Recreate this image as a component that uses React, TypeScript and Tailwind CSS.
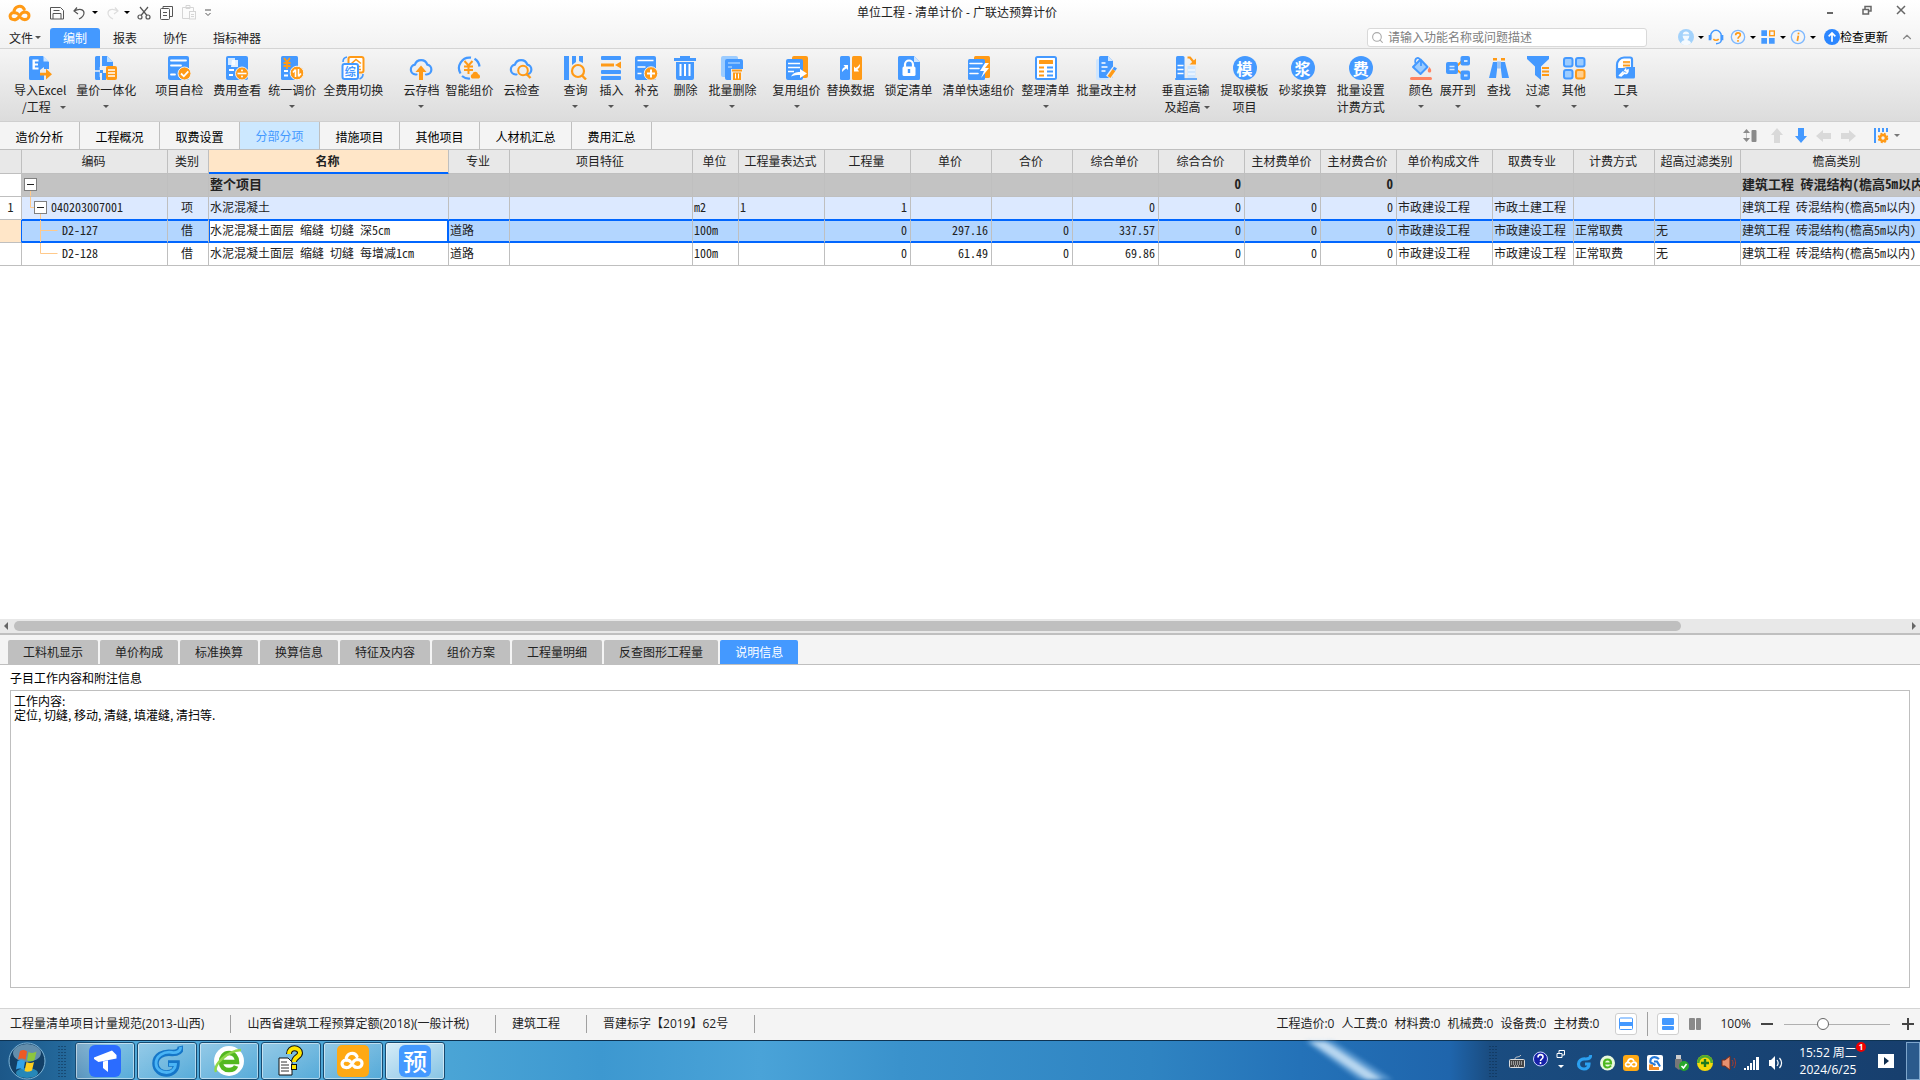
import React, { useState } from 'react';
import { ChevronUp, Search } from 'lucide-react';
import clsx from 'clsx';

const B = '#4499ff';
const O = '#ff9a16';

interface Tool {
  label: string;
  icon: React.ReactNode;
  gap: string;
  second?: string;
  secondPad?: string;
  menu?: boolean;
}

function Icon({ children, size = 'size-6' }: { children: React.ReactNode; size?: string }) {
  return (
    <svg viewBox="0 0 24 24" className={clsx('shrink-0', size)} fill="none">
      {children}
    </svg>
  );
}

function Caret({ color = 'text-black' }: { color?: string }) {
  return (
    <svg viewBox="0 0 6 3" className={clsx('w-[6px] h-[3px] shrink-0', color)}>
      <path d="M0 0h6L3 3z" fill="currentColor" />
    </svg>
  );
}

function RoundGlyph({ char }: { char: string }) {
  return (
    <span className="size-6 rounded-full bg-[#4499ff] text-white text-base font-bold leading-6 text-center block">
      {char}
    </span>
  );
}

function CloudMark({ color }: { color: string }) {
  return (
    <g stroke={color} strokeWidth="3.200" strokeLinecap="round" fill="none">
      <path d="M7.500 18.500C.5 19 .5 11.500 6 11C6.500 3.500 14.500 2.500 17 7.500" />
      <path d="M7.500 18.500C12.500 18.500 11.500 10.500 17.500 10.500C24 11 23 18.500 17.500 18.500C15.500 18.500 14.500 18 13.800 17" />
      <path d="M6.500 11.200c1.800-.2 3 .2 3.800 1.300" />
    </g>
  );
}

const cloud = (
  <path
    d="M7.500 18.500H6.500a5 5 0 0 1-.6-9.900 6.500 6.500 0 0 1 12.400 0 5 5 0 0 1-.6 9.900H17"
    stroke={B}
    strokeWidth="2.200"
    strokeLinecap="round"
  />
);

const tools: Tool[] = [
  {
    label: '导入Excel', second: '/工程', secondPad: 'pl-2', menu: true, gap: 'ml-[14px]',
    icon: (
      <Icon>
        <path d="M1 1.500A1.500 1.500 0 0 1 2.500 0H15l6 6v7h-5v-2l-4 3v5h4v5H2.500A1.500 1.500 0 0 1 1 22.500z" fill={B} />
        <path d="M15.500 0 21 5.500h-5.500z" fill="#cfe6ff" />
        <path d="M4.500 3.500h6v2h-3.600v2H10v2H6.900v2h3.600v2h-6z" fill="#fff" />
        <path d="M12 16.800h6v-4l6 5.400-6 5.300v-4h-6z" fill={O} />
      </Icon>
    )
  },
  {
    label: '量价一体化', menu: true, gap: 'ml-[10px]',
    icon: (
      <Icon>
        <path d="M1 1.500A1.500 1.500 0 0 1 2.500 0H6v24H2.500A1.500 1.500 0 0 1 1 22.500zM8 0h5l6 6v4H8zM8 17h4v7H8z" fill={B} />
        <path d="M13 0l6 6h-6z" fill="#bfe0ff" />
        <path d="M0 15h16M6.500 11v10" stroke="#f2f2f2" strokeWidth="1.600" />
        <path d="M6 14h3v3H6z" fill={B} />
        <rect x="12" y="10" width="11" height="14" rx="2" fill={O} />
        <path d="M14 14h7M14 17h7M14 20h7" stroke="#fff" strokeWidth="1.500" />
      </Icon>
    )
  },
  {
    label: '项目自检', gap: 'ml-[19px]',
    icon: (
      <Icon>
        <rect x="1" width="21" height="24" rx="2" fill={B} />
        <path d="M4 4.500h15M4 9.500h10M4 18.500h4" stroke="#fff" strokeWidth="1.800" strokeLinecap="round" />
        <circle cx="17.500" cy="17.500" r="6.500" fill={O} stroke="#f0f0f0" />
        <path d="m14 17.500 2.800 2.800 4.500-5" stroke="#fff" strokeWidth="1.800" />
      </Icon>
    )
  },
  {
    label: '费用查看', gap: 'ml-[10px]',
    icon: (
      <Icon>
        <rect x="1" width="22" height="24" rx="2" fill={B} />
        <path d="M3 2h7v7H3z" fill="#d5e9ff" />
        <path d="M7 4h6v7H6z" fill="#fff" opacity=".85" />
        <path d="M4 14h5M4 19h4" stroke="#fff" strokeWidth="1.800" />
        <circle cx="17" cy="17.500" r="6.500" fill={O} stroke="#f0f0f0" />
        <path d="M12.500 17.500h9" stroke="#fff" strokeWidth="1.600" />
        <circle cx="17" cy="14.500" r="1" fill="#fff" />
        <circle cx="17" cy="20.500" r="1" fill="#fff" />
      </Icon>
    )
  },
  {
    label: '统一调价', menu: true, gap: 'ml-[7px]',
    icon: (
      <Icon>
        <rect x="1" width="17" height="24" rx="1.500" fill={B} />
        <path d="m4 2 3 4 3-4M7 6v7M3.500 7h7M3.500 10h7" stroke={O} strokeWidth="1.800" />
        <path d="M4 15h4M4 19.500h4" stroke="#fff" strokeWidth="1.800" />
        <circle cx="17" cy="17" r="6.800" fill={O} stroke="#f0f0f0" />
        <path d="M15.500 13.500V21M15.500 13.500l-2.500 3M18.500 20.500V13M18.500 20.500l2.500-3" stroke="#fff" strokeWidth="1.600" />
      </Icon>
    )
  },
  {
    label: '全费用切换', gap: 'ml-[7px]',
    icon: (
      <Icon>
        <rect x="7.500" y="1" width="15" height="15.500" rx="2" stroke={O} strokeWidth="2" fill="#fff" />
        <path d="M10.500 7.500 15 3.500l5 4M19.500 10.500h-2M20 13.500h-2.500" stroke={O} strokeWidth="1.600" />
        <rect x="1.500" y="8" width="15.500" height="15" rx="2" stroke={B} strokeWidth="2" fill="#fff" />
        <text x="3.700" y="19.700" fontSize="11" fontWeight="700" fill={B}>综</text>
        <path d="M2 6c0-3 1-4.500 4-5M22 18c0 2.500-1 4-3.500 5" stroke={B} strokeWidth="1.600" />
      </Icon>
    )
  },
  {
    label: '云存档', menu: true, gap: 'ml-[20px]',
    icon: (
      <Icon>
        {cloud}
        <path d="M12 9.500 17.500 16H14v8h-4v-8H6.500z" fill={O} />
      </Icon>
    )
  },
  {
    label: '智能组价', gap: 'ml-[6px]',
    icon: (
      <Icon>
        <path d="M3.500 17.500A10.500 10.500 0 0 1 14 1.700M17.500 2.800a10.500 10.500 0 0 1 5 7.700M5 20a10.500 10.500 0 0 0 8 2.500" stroke={B} strokeWidth="2.200" />
        <path d="m7.500 5 4 4.500 4-4.500M11.500 9.500V18M7 10.500h9M7 14h9" stroke={O} strokeWidth="2" />
        <path d="M15 22.500a2.500 2.500 0 0 1 .5-4.500c.5-3 5-3 5.500 0a2.500 2.500 0 0 1 1 4.500z" fill={O} />
      </Icon>
    )
  },
  {
    label: '云检查', gap: 'ml-[10px]',
    icon: (
      <Icon>
        {cloud}
        <circle cx="14" cy="14.500" r="4.800" stroke={O} strokeWidth="2" fill="#eee" />
        <path d="m17.500 18 4 4" stroke={O} strokeWidth="2.400" />
      </Icon>
    )
  },
  {
    label: '查询', menu: true, gap: 'ml-[24px]',
    icon: (
      <Icon>
        <path d="M1 0h5v24H1zM9 0h4v6l-4 3zM16 0h4v7l-4-2z" fill={B} />
        <circle cx="15" cy="15" r="6" stroke={O} strokeWidth="2.200" />
        <path d="m19 19.500 4 4" stroke={O} strokeWidth="2.400" />
      </Icon>
    )
  },
  {
    label: '插入', menu: true, gap: 'ml-[12px]',
    icon: (
      <Icon>
        <rect x="2" width="20" height="4" rx="1" fill={B} />
        <rect x="2" y="14" width="20" height="4" rx="1" fill={B} />
        <rect x="2" y="20" width="20" height="4" rx="1" fill={B} />
        <path d="M2 7.500h13v3H2zM22 5.500v7l-6-3.500z" fill={O} />
      </Icon>
    )
  },
  {
    label: '补充', menu: true, gap: 'ml-[11px]',
    icon: (
      <Icon>
        <rect x="1" width="21" height="24" rx="2" fill={B} />
        <path d="M3.500 4.500h16M3.500 11h8M3.500 17.500h4" stroke="#fff" strokeWidth="1.600" />
        <circle cx="17" cy="17.500" r="6.800" fill={O} stroke="#f0f0f0" />
        <path d="M17 13.500v8M13 17.500h8" stroke="#fff" strokeWidth="2" />
      </Icon>
    )
  },
  {
    label: '删除', gap: 'ml-[15px]',
    icon: (
      <Icon>
        <path d="M1 2h6V0h10v2h6v3H1zM3 6h18v16a2 2 0 0 1-2 2H5a2 2 0 0 1-2-2z" fill={B} />
        <path d="M7.500 8v12M12 8v12M16.500 8v12" stroke="#fff" strokeWidth="2" />
      </Icon>
    )
  },
  {
    label: '批量删除', menu: true, gap: 'ml-[11px]',
    icon: (
      <Icon>
        <rect x="1" width="17" height="21" rx="2" fill="#9cccff" />
        <rect x="5" y="3" width="18" height="21" rx="2" fill={B} />
        <path d="M8 7h12M8 11h4" stroke="#9cccff" strokeWidth="1.500" />
        <path d="M11 13h12v11H11z" fill="#eee" />
        <path d="M12 13.500h10v2H12zM13 16.500h8V24h-8z" fill={O} />
        <path d="M15.500 17.500v5M18.500 17.500v5" stroke="#fff" />
      </Icon>
    )
  },
  {
    label: '复用组价', menu: true, gap: 'ml-4',
    icon: (
      <Icon>
        <rect x="7" width="16" height="22" rx="2" fill={O} />
        <rect x="1" y="3" width="17" height="21" rx="2" fill={B} />
        <path d="M3 7.500h12M3 11.500h12M3 15.500h6" stroke="#fff" strokeWidth="1.500" />
        <path d="M6 20.500c2-3.500 5-4.500 9-4.500v-3l7 4.500-7 4.500v-3c-4 0-6 0-9 1.500z" fill="#fff" />
      </Icon>
    )
  },
  {
    label: '替换数据', gap: 'ml-[6px]',
    icon: (
      <Icon>
        <rect x="1" width="10" height="24" rx="1.500" fill={B} />
        <rect x="13" width="10" height="24" rx="1.500" fill={O} />
        <path d="M3 16c0-3 .5-4 3-5L4.500 9H9v5l-1.500-1.500C6 13 5 14 3 16zM21 8c0 3-.5 4-2.500 5l1.500 2.500h-5v-5l1.500 1.500c2-1 3-2 4.500-4z" fill="#fff" />
      </Icon>
    )
  },
  {
    label: '锁定清单', gap: 'ml-[10px]',
    icon: (
      <Icon>
        <path d="M1 1.500A1.500 1.500 0 0 1 2.500 0H17l6 6v16.500a1.500 1.500 0 0 1-1.500 1.500h-19A1.500 1.500 0 0 1 1 22.500z" fill={B} />
        <path d="m17 0 6 6h-6z" fill="#cfe6ff" />
        <path d="M8 11V8.500a4 4 0 0 1 8 0V11" stroke="#fff" strokeWidth="2.200" />
        <rect x="5.500" y="10.500" width="13" height="9.500" rx="1.500" fill="#fff" />
        <path d="M12 13v4" stroke={B} strokeWidth="2.400" />
      </Icon>
    )
  },
  {
    label: '清单快速组价', gap: 'ml-[10px]',
    icon: (
      <Icon>
        <rect x="7" width="16" height="22" rx="1.500" fill={O} />
        <rect x="1" y="3" width="17" height="21" rx="1.500" fill={B} />
        <path d="M3 7.500h12M3 12.500h9M3 17.500h8" stroke="#fff" strokeWidth="1.600" strokeLinecap="round" />
        <path d="m18 7-5 8h4l-3 7 8-10h-4l4-5z" fill="#fff" />
      </Icon>
    )
  },
  {
    label: '整理清单', menu: true, gap: 'ml-[7px]',
    icon: (
      <Icon>
        <rect x="2" y="1" width="20" height="22" rx="1.500" stroke={B} strokeWidth="2" fill="#fff" />
        <rect x="5" y="4" width="14" height="4" rx=".5" fill={O} />
        <path d="M5 11.500h5M5 15.500h5M5 19.500h5" stroke={O} strokeWidth="1.800" />
        <path d="M13 11.500h6M13 15.500h6M13 19.500h6" stroke={B} strokeWidth="1.800" />
      </Icon>
    )
  },
  {
    label: '批量改主材', gap: 'ml-[7px]',
    icon: (
      <Icon>
        <rect x="1" y="3" width="13" height="21" rx="1.500" fill="#cfe6ff" />
        <path d="M4 1.500A1.500 1.500 0 0 1 5.500 0H13l5 5v15a2 2 0 0 1-2 2H5.500A1.500 1.500 0 0 1 4 20.500z" fill={B} />
        <path d="m13 0 5 5h-5z" fill="#cfe6ff" />
        <path d="M6.500 7h4M6.500 11h6M6.500 15h4" stroke="#fff" strokeWidth="1.500" />
        <path d="m13.500 21.500 6.500-9" stroke="#f0f0f0" strokeWidth="6" />
        <path d="m14 21 5-7" stroke={O} strokeWidth="3.400" />
        <path d="m19 14 1.500-2.500" stroke={B} strokeWidth="3.400" />
      </Icon>
    )
  },
  {
    label: '垂直运输', second: '及超高', secondPad: 'pl-[3px]', menu: true, gap: 'ml-[25px]',
    icon: (
      <Icon>
        <path d="M2 1.500A1.500 1.500 0 0 1 3.500 0H9a1.500 1.500 0 0 1 1.500 1.500V24H2z" fill={B} />
        <path d="M3.500 9.500h6M3.500 13.500h6M3.500 17.500h6" stroke="#fff" strokeWidth="1.500" />
        <path d="M13.500 10h8v12h-8z" fill="#cfe6ff" />
        <path d="M14 14h7M14 18h7" stroke="#fff" />
        <path d="M1 23h22" stroke={B} strokeWidth="1.600" />
        <path d="M13.500 1.500h2.500l4 5" stroke={O} strokeWidth="2.200" />
        <path d="M22 2.500V8.500h-6.500z" fill={O} />
      </Icon>
    )
  },
  { label: '提取模板', second: '项目', gap: 'ml-[11px]', icon: <RoundGlyph char="模" /> },
  { label: '砂浆换算', gap: 'ml-[10px]', icon: <RoundGlyph char="浆" /> },
  { label: '批量设置', second: '计费方式', gap: 'ml-[10px]', icon: <RoundGlyph char="费" /> },
  {
    label: '颜色', menu: true, gap: 'ml-[24px]',
    icon: (
      <Icon>
        <path d="M11.500 3.500 18.500 11 11.500 18 4 11z" fill="#9cccff" stroke={B} strokeWidth="2" strokeLinejoin="round" />
        <path d="M6.500 7.500c-1.500-6 4-8 5.500-1.500v4" stroke={B} strokeWidth="1.800" />
        <path d="M20.500 11c3 4 1.500 5.500 0 5.500s-3-1.500 0-5.500z" fill="#ff8360" />
        <rect x="1" y="21" width="22" height="3" rx="1.500" fill="#ff8360" />
      </Icon>
    )
  },
  {
    label: '展开到', menu: true, gap: 'ml-[7px]',
    icon: (
      <Icon>
        <path d="m11 10 5-5M11 14l5 4" stroke={O} strokeWidth="1.800" />
        <rect y="6" width="12" height="12" rx="2" fill={B} />
        <path d="M3.500 10.500h5M3.500 13.500h5" stroke="#cfe6ff" strokeWidth="1.400" />
        <rect x="14.500" width="9.500" height="9.500" rx="2" fill={B} />
        <rect x="14.500" y="14.500" width="9.500" height="9.500" rx="2" fill={B} />
        <path d="M18 5h3.500M18 19.500h3.500" stroke="#cfe6ff" strokeWidth="2" />
      </Icon>
    )
  },
  {
    label: '查找', gap: 'ml-[11px]',
    icon: (
      <Icon>
        <path d="M6 6h4v8l-1 8H2zM14 6h4l4 16h-7l-1-8zM10.500 5.500h1v7h-1zM12.500 5.500h1v7h-1z" fill={B} />
        <path d="M6 2h4v2.500H6zM14 2h4v2.500h-4z" fill={O} />
      </Icon>
    )
  },
  {
    label: '过滤', menu: true, gap: 'ml-[15px]',
    icon: (
      <Icon>
        <path d="M1 0h22v3l-8 7.500V24l-6-5v-8.500L1 3z" fill={B} />
        <path d="M16 12h7M16 15.500h7M16 19h7" stroke={O} strokeWidth="1.800" />
      </Icon>
    )
  },
  {
    label: '其他', menu: true, gap: 'ml-[12px]',
    icon: (
      <Icon>
        <g fill="#9cccff" stroke={B} strokeWidth="2">
          <rect x="2" y="2" width="8.500" height="8.500" rx="2" />
          <rect x="14" y="2" width="8.500" height="8.500" rx="2" />
          <rect x="2" y="14" width="8.500" height="8.500" rx="2" />
        </g>
        <rect x="14" y="14" width="8.500" height="8.500" rx="2" fill="#ffcf8f" stroke={O} strokeWidth="2" />
      </Icon>
    )
  },
  {
    label: '工具', menu: true, gap: 'ml-[28px]',
    icon: (
      <Icon>
        <path d="M3 20V9c0-4 3-7.500 7-7.500h6a2 2 0 0 1 2 2V12" stroke={B} strokeWidth="2.200" fill="#fff" />
        <path d="M9 5h7v7H9z" fill="#ffe3bd" />
        <path d="M9 6h7M9 9.500h7" stroke={O} strokeWidth="1.600" />
        <path d="M2 12h8l3-1h8v10a1.500 1.500 0 0 1-1.500 1.500h-16A1.500 1.500 0 0 1 2 21z" fill={B} />
        <path d="M5 20l4.500-4.500M12 12.500l-1 2 1.500.5 1.500-1c.5 3-2 4-3.500 3l-4 3.500" stroke="#fff" strokeWidth="1.600" />
      </Icon>
    )
  }
];

const pageTabs = ['造价分析', '工程概况', '取费设置', '分部分项', '措施项目', '其他项目', '人材机汇总', '费用汇总'];
const detailTabs = ['工料机显示', '单价构成', '标准换算', '换算信息', '特征及内容', '组价方案', '工程量明细', '反查图形工程量', '说明信息'];

const columns = [
  { title: '', width: 22, align: 'text-center' },
  { title: '编码', width: 146, align: 'text-left' },
  { title: '类别', width: 41, align: 'text-center' },
  { title: '名称', width: 240, align: 'text-left' },
  { title: '专业', width: 61, align: 'text-left' },
  { title: '项目特征', width: 183, align: 'text-left' },
  { title: '单位', width: 46, align: 'text-left' },
  { title: '工程量表达式', width: 86, align: 'text-left' },
  { title: '工程量', width: 86, align: 'text-right' },
  { title: '单价', width: 81, align: 'text-right' },
  { title: '合价', width: 81, align: 'text-right' },
  { title: '综合单价', width: 86, align: 'text-right' },
  { title: '综合合价', width: 86, align: 'text-right' },
  { title: '主材费单价', width: 76, align: 'text-right' },
  { title: '主材费合价', width: 76, align: 'text-right' },
  { title: '单价构成文件', width: 96, align: 'text-left' },
  { title: '取费专业', width: 81, align: 'text-left' },
  { title: '计费方式', width: 81, align: 'text-left' },
  { title: '超高过滤类别', width: 86, align: 'text-left' },
  { title: '檐高类别', width: 194, align: 'text-left' }
];

const height5m = '建筑工程 砖混结构(檐高5m以内)';

const rows = [
  { kind: 'total', cells: ['', '', '', '整个项目', '', '', '', '', '', '', '', '', '0', '', '0', '', '', '', '', height5m] },
  { kind: 'item', cells: ['1', '040203007001', '项', '水泥混凝土', '', '', 'm2', '1', '1', '', '', '0', '0', '0', '0', '市政建设工程', '市政土建工程', '', '', height5m] },
  { kind: 'selected', cells: ['', 'D2-127', '借', '水泥混凝土面层 缩缝 切缝 深5cm', '道路', '', '100m', '', '0', '297.16', '0', '337.57', '0', '0', '0', '市政建设工程', '市政建设工程', '正常取费', '无', height5m] },
  { kind: 'plain', cells: ['', 'D2-128', '借', '水泥混凝土面层 缩缝 切缝 每增减1cm', '道路', '', '100m', '', '0', '61.49', '0', '69.86', '0', '0', '0', '市政建设工程', '市政建设工程', '正常取费', '无', height5m] }
];

const rowStyles: Record<string, string> = {
  total: 'bg-[#c3c3c3] font-bold text-[13px] border-[#bfbfbf]',
  item: 'bg-[#dce9ff] border-r-[#bfbfbf] border-b-[#0066ff]',
  selected: 'bg-[#b3d6ff] border-r-[#bfbfbf] border-b-[#0066ff] shadow-[inset_0_1px_0_#0066ff,inset_0_-1px_0_#0066ff]',
  plain: 'bg-white border-[#bfbfbf]'
};

function Toggle({ x }: { x: number }) {
  return (
    <>
      <rect x={x + 0.5} y="4.500" width="12" height="12" fill="#fff" stroke="#808080" />
      <path d={`M${x + 3} 10.500h7`} stroke="#222" />
    </>
  );
}

function TreeCell({ kind, text }: { kind: string; text: string }) {
  const branch = '#ffc98a';
  if (kind === 'total') {
    return (
      <button type="button" aria-label="折叠整个项目" className="block">
        <svg width="28" height="22" fill="none">
          <path d="M8.500 17v5" stroke={branch} />
          <Toggle x={2} />
        </svg>
      </button>
    );
  }
  if (kind === 'item') {
    return (
      <div className="flex items-center">
        <button type="button" aria-label="折叠清单" className="block">
          <svg width="29" height="22" fill="none">
            <path d="M8.500 0v10.500h4M18.500 17v5" stroke={branch} />
            <Toggle x={12} />
          </svg>
        </button>
        <span className="pb-[2px]">{text}</span>
      </div>
    );
  }
  return (
    <div className="flex items-center">
      <svg width="40" height="22" fill="none">
        <path d={kind === 'selected' ? 'M18.500 0v22M18.500 10.500h17' : 'M18.500 0v10.500h17'} stroke={branch} />
      </svg>
      <span className="pb-[2px]">{text}</span>
    </div>
  );
}

function BillTable() {
  return (
    <table className="table-fixed w-[1935px] border-separate border-spacing-0 text-xs leading-4 text-[#222] font-['Noto_Sans_Mono_CJK_SC','Noto_Sans_CJK_SC',monospace]">
      <colgroup>
        {columns.map((col, i) => <col key={i} style={{ width: col.width }} />)}
      </colgroup>
      <thead>
        <tr>
          {columns.map((col, i) => (
            <th
              key={i}
              className={clsx(
                'h-6 pt-0 pb-[2px] pl-0 pr-[2px] border-r border-b border-r-[#bfbfbf] text-center whitespace-nowrap',
                col.title === '名称'
                  ? 'bg-[#ffe6c8] font-bold border-b-[#0066ff] shadow-[inset_0_-1px_0_#0066ff]'
                  : 'bg-[#e8e8e8] font-normal border-b-[#bfbfbf]'
              )}
            >
              {col.title}
            </th>
          ))}
        </tr>
      </thead>
      <tbody>
        {rows.map((row, r) => (
          <tr key={r}>
            {row.cells.map((text, c) => {
              if (c === 0) {
                return (
                  <td
                    key={c}
                    className={clsx(
                      'h-[23px] pt-0 px-0 pb-[2px] border-r border-b border-b-[#bfbfbf] text-center',
                      row.kind === 'selected' ? 'bg-[#ffe6c8] border-r-[#0066ff]' : 'bg-white border-r-[#bfbfbf]'
                    )}
                  >
                    {text}
                  </td>
                );
              }
              const editing = row.kind === 'selected' && c === 3;
              return (
                <td
                  key={c}
                  className={clsx(
                    'h-[23px] pt-0 border-r border-b whitespace-pre overflow-hidden',
                    c === 1 ? 'px-0 pb-0' : 'pl-px pr-[3px] pb-[2px]',
                    columns[c].align,
                    editing
                      ? 'bg-white border-[#0066ff] shadow-[inset_0_0_0_1px_#0066ff]'
                      : rowStyles[row.kind]
                  )}
                >
                  {c === 1 ? <TreeCell kind={row.kind} text={text} /> : text}
                </td>
              );
            })}
          </tr>
        ))}
      </tbody>
    </table>
  );
}

function TitleBar() {
  return (
    <div className="flex items-start h-6 text-[#555]">
      <div className="flex-1 flex items-center pl-2">
        <svg viewBox="0 2 24 19" className="w-[23px] h-[18px] mt-[3px]"><CloudMark color={O} /></svg>
        <div className="flex items-center pl-[19px] pt-[2px]">
          <button type="button" aria-label="保存">
            <svg width="14" height="14" fill="none" stroke="currentColor"><path d="M.5 1.500h10l3 3v8.500H.5zM3 13V7.500h8V13M3.500 4.500h6" /></svg>
          </button>
          <button type="button" aria-label="撤销" className="ml-2">
            <svg width="14" height="14" fill="none" stroke="currentColor" strokeWidth="1.200"><path d="M5 1.500 2 5l4 3M2 5c6-3 10-1.500 10 2 0 2.500-2 4.500-5 6" /></svg>
          </button>
          <span className="ml-[6px]"><Caret /></span>
          <button type="button" aria-label="重做" className="ml-2 text-[#ddd]">
            <svg width="14" height="14" fill="none" stroke="currentColor" strokeWidth="1.200"><path d="m9 1.500 3 3.500-4 3M12 5C6 2 2 3.500 2 7c0 2.500 2 4.500 5 6" /></svg>
          </button>
          <span className="ml-1"><Caret /></span>
          <button type="button" aria-label="剪切" className="ml-[7px]">
            <svg width="14" height="14" fill="none" stroke="currentColor" strokeWidth="1.200"><circle cx="3" cy="11" r="2" /><circle cx="11" cy="11" r="2" /><path d="m3 1 7 8.500M11 1 4 9.500" /></svg>
          </button>
          <button type="button" aria-label="复制" className="ml-[9px]">
            <svg width="14" height="14" fill="none" stroke="currentColor"><rect x=".5" y="2.500" width="9" height="11" rx="1" /><path d="M3 2.500v-2h9.500v10H10M3 6.500h4M3 9.500h4" /></svg>
          </button>
          <button type="button" aria-label="粘贴" className="ml-2 text-[#d5d5d5]">
            <svg width="15" height="15" fill="none" stroke="currentColor"><path d="M7 13.500H.5v-11h11V6M4 3.500v-3h4v3z" /><rect x="7.500" y="6.500" width="6" height="7.500" /><path d="M9 9.500h3M9 11.500h3" /></svg>
          </button>
          <button type="button" aria-label="自定义快速访问" className="ml-[7px]">
            <svg width="8" height="8" fill="none" stroke="currentColor"><path d="M1 1h6M1.500 4 4 6.500 6.500 4" /></svg>
          </button>
        </div>
      </div>
      <h1 className="text-xs text-[#222] pt-1 leading-4 font-['Open_Sans','Noto_Sans_CJK_SC',sans-serif]">单位工程 - 清单计价 - 广联达预算计价</h1>
      <div className="flex-1 flex justify-end items-center pr-[14px] pt-[3px]">
        <button type="button" aria-label="最小化"><svg width="12" height="12"><path d="M3 9h6" stroke="#666" strokeWidth="2" /></svg></button>
        <button type="button" aria-label="还原" className="ml-[26px]">
          <svg width="10" height="12" fill="none" stroke="#666" strokeWidth="1.500"><path d="M1 5.500h5.500v4.500H1zM3 5V2.500h6V7H7" /></svg>
        </button>
        <button type="button" aria-label="关闭" className="ml-6"><svg width="10" height="12"><path d="m1 2 8 8M9 2l-8 8" stroke="#666" strokeWidth="1.500" /></svg></button>
      </div>
    </div>
  );
}

function MenuBar() {
  return (
    <nav className="flex items-center h-6 text-xs text-[#222] border-b border-[#d4d4d4]">
      <button type="button" className="flex items-center gap-[2px] pl-[9px] pt-[2px] w-[50px]">文件<Caret color="text-[#555]" /></button>
      <button type="button" className="w-[50px] h-5 mt-[3px] rounded-t-[3px] bg-[#4499ff] text-white">编制</button>
      <button type="button" className="w-[50px] pt-[2px]">报表</button>
      <button type="button" className="w-[50px] pt-[2px]">协作</button>
      <button type="button" className="w-[74px] pt-[2px]">指标神器</button>
      <label className="ml-auto flex items-center w-[280px] h-[19px] mt-px bg-white border border-[#d9d9d9] rounded-[3px] pl-[3px] gap-1">
        <Search size={13} color="#aaa" />
        <input
          aria-label="搜索"
          placeholder="请输入功能名称或问题描述"
          className="flex-1 min-w-0 text-xs outline-none placeholder:text-[#808080]"
        />
      </label>
      <div className="flex items-center pl-[31px] pr-[6px] mt-px">
        <Icon size="size-4">
          <circle cx="12" cy="12" r="12" fill="#a3d2fb" />
          <path d="M7 9c0-7 10-7 10 0 0 6-3 6-2.500 8 4 1 5 3 5 4.500a12 12 0 0 1-15 0C4.500 20 5.500 18 9.500 17 10 15 7 15 7 9z" fill="#f4faff" />
          <path d="M5 9h14" stroke="#a3d2fb" strokeWidth="2" />
        </Icon>
        <span className="ml-1"><Caret /></span>
        <span className="ml-1">
          <Icon size="size-4">
            <path d="M4 15V10a8 8 0 0 1 16 0v6c0 4-4 6-8 6" stroke={B} strokeWidth="2.200" />
            <path d="M1 9h4v8H1zM19 9h4v8h-4z" fill={B} />
            <path d="M8 15c2 2.500 6 2.500 8 0" stroke={O} strokeWidth="2.400" />
          </Icon>
        </span>
        <span className="ml-[6px]">
          <Icon size="size-4">
            <circle cx="12" cy="12" r="10" stroke="#7db8ff" strokeWidth="2" />
            <path d="M8.500 9.500c0-5 7-4.500 7-.5 0 2.500-3.500 2.500-3.500 5.500M12 16.500V19" stroke={O} strokeWidth="2.400" />
          </Icon>
        </span>
        <span className="ml-1"><Caret /></span>
        <span className="ml-1">
          <Icon size="size-4">
            <path d="M2 2h8.500v8.500H2zM2 13.500h8.500V22H2zM13.500 13.500H22V22h-8.500z" fill={B} />
            <rect x="14.500" y="3" width="7" height="7" stroke={O} strokeWidth="2" />
          </Icon>
        </span>
        <span className="ml-1"><Caret /></span>
        <span className="ml-1">
          <Icon size="size-4">
            <circle cx="12" cy="12" r="10" stroke="#7db8ff" strokeWidth="2" />
            <path d="m12.500 10-1.500 8M13 5.500l-.5 2.500" stroke={O} strokeWidth="2.600" />
          </Icon>
        </span>
        <span className="ml-1"><Caret /></span>
        <button type="button" className="flex items-center ml-2 text-black">
          <Icon size="size-4">
            <circle cx="12" cy="12" r="12" fill="#2b86ff" />
            <path d="M12 19V7M7 11l5-5 5 5" stroke="#fff" strokeWidth="2.600" />
          </Icon>
          检查更新
        </button>
        <button type="button" aria-label="收起功能区" className="ml-3 text-[#888]"><ChevronUp size={14} /></button>
      </div>
    </nav>
  );
}

function Ribbon() {
  return (
    <div className="flex items-start h-[73px] pt-[7px] border-b border-[#cfcfcf] bg-linear-to-b from-[#f5f5f5] to-[#dcdcdc] text-xs leading-4 text-[#222]">
      {tools.map(tool => (
        <button key={tool.label} type="button" className={clsx('flex flex-col items-center shrink-0 whitespace-nowrap', tool.gap)}>
          {tool.icon}
          <span className="mt-[2px]">{tool.label}</span>
          {tool.second ? (
            <span className={clsx('flex items-center w-full pt-px', tool.menu ? 'justify-between' : 'justify-center', tool.secondPad)}>
              {tool.second}
              {tool.menu && <Caret color="text-[#555]" />}
            </span>
          ) : tool.menu && (
            <span className="flex items-center h-4"><Caret color="text-[#555]" /></span>
          )}
        </button>
      ))}
    </div>
  );
}

function PageTabs() {
  return (
    <div className="flex h-7 bg-[#f4f4f4] border-b border-[#bfbfbf] text-xs text-black">
      {pageTabs.map(tab => (
        <button
          key={tab}
          type="button"
          className={clsx(
            'border-r border-[#bfbfbf]',
            tab.length > 4 ? 'w-[92px]' : 'w-20',
            tab === '分部分项' ? 'bg-[#cce8ff] text-[#4499ff]' : 'pt-[2px]'
          )}
        >
          {tab}
        </button>
      ))}
      <div className="ml-auto flex items-center pr-5">
        <svg width="14" height="14"><path d="M3.500 0 7 4H0zM0 9h7l-3.500 4z" fill="#8a8a8a" /><path d="M3.500 3.500v6" stroke="#8a8a8a" strokeDasharray="1 1" /><rect x="8.500" y="1" width="5" height="12" rx="1" fill="#8a8a8a" /></svg>
        <svg width="12" height="16" className="ml-[14px]"><path d="m6 0 6 7H9v8H3V7H0z" fill="#d9d9d9" /></svg>
        <svg width="12" height="16" className="ml-3"><path d="M3 0h6v8h3l-6 7-6-7h3z" fill={B} /></svg>
        <svg width="16" height="12" className="ml-[9px]"><path d="m0 6 7-6v3h8v6H7v3z" fill="#d9d9d9" /></svg>
        <svg width="16" height="12" className="ml-[9px]"><path d="M15 6 8 0v3H0v6h8v3z" fill="#d9d9d9" /></svg>
        <svg width="15" height="16" className="ml-[17px]">
          <path d="M1 0v15M5 0v4M9 0v4M13 0v4" stroke={B} strokeWidth="2" />
          <circle cx="9" cy="10" r="3" fill="none" stroke={O} strokeWidth="2.600" />
          <circle cx="9" cy="10" r="4.500" fill="none" stroke={O} strokeWidth="1.500" strokeDasharray="2 1.600" />
        </svg>
        <span className="ml-[5px]"><Caret color="text-[#777]" /></span>
      </div>
    </div>
  );
}

function DetailPanel() {
  const [active, setActive] = useState('说明信息');
  return (
    <section className="flex-[373] min-h-0 flex flex-col bg-white">
      <div className="flex items-end gap-[2px] h-[30px] pl-2 bg-[#f4f4f4] border-b border-[#bfbfbf] text-xs text-[#222]">
        {detailTabs.map(tab => (
          <button
            key={tab}
            type="button"
            onClick={() => setActive(tab)}
            className={clsx('h-6 px-[15px] rounded-t-[2px]', tab === active ? 'bg-[#4499ff] text-white' : 'bg-[#bfbfbf]')}
          >
            {tab}
          </button>
        ))}
      </div>
      <label htmlFor="note" className="block pl-[10px] pt-[5px] text-xs leading-4 text-black">子目工作内容和附注信息</label>
      <textarea
        id="note"
        readOnly
        value={'工作内容:\n定位, 切缝, 移动, 清缝, 填灌缝, 清扫等.'}
        className="flex-1 resize-none outline-none mx-[10px] mt-1 mb-5 border border-[#bfbfbf] px-[3px] py-[3px] text-xs leading-[14px] text-black"
      />
    </section>
  );
}

function StatusBar() {
  const specs = ['工程量清单项目计量规范(2013-山西)', '山西省建筑工程预算定额(2018)(一般计税)', '建筑工程', '晋建标字【2019】62号'];
  const totals = ['工程造价:0', '人工费:0', '材料费:0', '机械费:0', '设备费:0', '主材费:0'];
  return (
    <footer className="flex items-center h-8 pb-px bg-[#f4f4f4] border-t border-[#d4d4d4] text-xs text-[#222] whitespace-nowrap font-['Open_Sans','Noto_Sans_CJK_SC',sans-serif]">
      {specs.map((spec, i) => (
        <span key={spec} className={clsx('pr-[26px] border-r border-[#a0a0a0] leading-[18px]', i === 0 ? 'pl-[10px]' : 'pl-4')}>{spec}</span>
      ))}
      <div className="ml-auto flex items-center gap-[7px]">
        {totals.map(total => <span key={total}>{total}</span>)}
      </div>
      <button type="button" aria-label="单屏" className="ml-4 flex items-center justify-center w-[22px] h-[22px] rounded-[3px] bg-white border border-[#cfcfcf]">
        <svg width="14" height="14" fill="none"><rect x=".5" y="1" width="13" height="11.500" rx="1" stroke={B} /><path d="M0 7h14" stroke={B} strokeWidth="4" /></svg>
      </button>
      <span className="ml-[10px] h-6 w-px bg-[#a0a0a0]" />
      <button type="button" aria-label="上下分屏" className="ml-[9px] flex items-center justify-center w-[22px] h-[22px] rounded-[3px] bg-white border border-[#cfcfcf]">
        <svg width="12" height="12" fill={B}><rect width="12" height="7" rx="1" /><rect y="8" width="12" height="4" rx="1" /></svg>
      </button>
      <button type="button" aria-label="左右分屏" className="ml-[10px]">
        <svg width="13" height="12" fill="#8a8a8a"><rect width="6" height="12" rx="1" /><rect x="7" width="5" height="12" rx="1" /></svg>
      </button>
      <span className="ml-[18px]">100%</span>
      <button type="button" aria-label="缩小" className="ml-[10px]"><svg width="12" height="12"><path d="M0 6h12" stroke="#444" strokeWidth="2" /></svg></button>
      <input
        type="range"
        aria-label="缩放"
        defaultValue={35}
        className="ml-[11px] w-[106px] h-3 appearance-none bg-transparent [&::-webkit-slider-runnable-track]:h-px [&::-webkit-slider-runnable-track]:bg-[#b0b0b0] [&::-webkit-slider-thumb]:appearance-none [&::-webkit-slider-thumb]:size-3 [&::-webkit-slider-thumb]:-mt-[6px] [&::-webkit-slider-thumb]:rounded-full [&::-webkit-slider-thumb]:border [&::-webkit-slider-thumb]:border-[#666] [&::-webkit-slider-thumb]:bg-white"
      />
      <button type="button" aria-label="放大" className="ml-3 mr-[6px]"><svg width="12" height="12"><path d="M0 6h12M6 0v12" stroke="#444" strokeWidth="2" /></svg></button>
    </footer>
  );
}

function Grip() {
  return (
    <svg width="8" height="32" className="shrink-0">
      <path d="M1 1v31M4 1v31M7 1v31" stroke="#0d2c4d" strokeDasharray="1 2" />
    </svg>
  );
}

const apps = [
  {
    name: 'T',
    icon: (
      <svg width="32" height="32"><rect width="32" height="32" rx="6" fill="#2b6cff" /><path d="M5 12.500 23 5.500l4.500 4.500v3.500L9.500 17 5 14zM14 16.500l5-1v11.500l-5-4z" fill="#fff" /></svg>
    )
  },
  {
    name: 'G',
    icon: (
      <svg width="32" height="32" fill="none">
        <path d="M29.500 1c1 5-3 7-8 7C12 6.500 4.500 11 4.500 18.500 4.500 25 10 28.500 15.500 28.500c6 0 10-4 10-10H17" stroke="#1576c8" strokeWidth="6.500" />
        <path d="M29.500 2c.5 4-4 6-8 5.500C12.500 6 5 11 5 18.500c0 5.500 5 9 10.500 9 5 0 9-3.500 9-8H18" stroke="#4ab4f5" strokeWidth="2.800" />
      </svg>
    )
  },
  {
    name: 'e',
    icon: (
      <svg width="32" height="32" fill="none">
        <circle cx="16" cy="16" r="15" fill="#fff" />
        <path d="M9 17h15c0-5-3-9-8-9s-8 4-8 9 3 8 8 8c3 0 6-1 7-4" stroke="#52b820" strokeWidth="4.500" />
        <path d="M3 27C0 20 14 6 28 5" stroke="#8fd84a" strokeWidth="2.400" />
      </svg>
    )
  },
  {
    name: '帮助',
    icon: (
      <svg width="32" height="32" fill="none">
        <path d="M4 13h9l4 4v13H4z" fill="#fff" stroke="#111" />
        <path d="M6 17h6M6 20h8M6 23h8M6 26h8" stroke="#333" />
        <path d="M14 9c0-8 11-7 11-1 0 4-6 4-6 9" stroke="#111" strokeWidth="6" />
        <path d="M14 9c0-8 11-7 11-1 0 4-6 4-6 9" stroke="#ffe600" strokeWidth="4" />
        <rect x="16.500" y="19.500" width="5" height="5" fill="#ffe600" stroke="#111" />
      </svg>
    )
  },
  {
    name: '广联达',
    icon: (
      <svg width="32" height="32" fill="none">
        <rect width="32" height="32" rx="5" fill="#ffa914" />
        <g transform="translate(3 4)"><CloudMark color="#fff" /></g>
      </svg>
    )
  },
  {
    name: '预',
    icon: <span className="size-8 rounded-[6px] bg-[#4499ff] text-white text-2xl font-medium leading-8 text-center">预</span>
  }
];

function Taskbar() {
  return (
    <div className="flex items-center h-10 border-t border-[#0e3352] text-white bg-[linear-gradient(90deg,#1c5788_0px,#246a9d_70px,#4fa8d8_110px,#4ba5d6_440px,#3d98d0_600px,#4aa3d8_760px,#3a92cc_900px,#2f84c2_1150px,#2472b8_1300px,#1f65ac_1450px,#1a4c80_1490px,#173f6e_1900px)]">
      <button type="button" aria-label="开始" className="ml-2 shrink-0">
        <svg width="38" height="38" fill="none">
          <circle cx="19" cy="19" r="18" fill="#123f66" stroke="#7fb6d8" />
          <ellipse cx="19" cy="11" rx="14" ry="9" fill="#8fb8d2" opacity=".65" />
          <ellipse cx="19" cy="31" rx="11" ry="5" fill="#2fa7dc" opacity=".7" />
          <path d="M12 9c3-1.500 5-1 7 .5L17.500 18c-2-1.500-4-2-7.500-.5z" fill="#ee5a24" />
          <path d="M20.500 10c2.500 1 4.500 1.500 8-.5l-2 8.500c-3 1.500-5 1.500-7.500.5z" fill="#8cc63f" />
          <path d="M9.500 19c3-1.500 5.500-1 7.500.5L15.500 28c-2-1.500-4.500-2-7.500-.5z" fill="#35a3e8" />
          <path d="M18.500 20c2.500 1 4.500 1.500 7.500 0l-2 8.500c-3 1.500-5 1.500-7.500.5z" fill="#ffce1f" />
        </svg>
      </button>
      <span className="ml-3"><Grip /></span>
      <div className="flex gap-[2px] ml-[9px]">
        {apps.map(app => (
          <button
            key={app.name}
            type="button"
            aria-label={app.name}
            className={clsx(
              'flex items-center justify-center w-[60px] h-[38px] rounded-[3px] border border-[#174a70] shadow-[inset_0_0_0_1px_rgba(255,255,255,0.5)]',
              app.name === '预' ? 'bg-linear-to-br from-[#d5ecf8] to-[#86c4e4]' : 'bg-linear-to-br from-white/40 to-white/5'
            )}
          >
            {app.icon}
          </button>
        ))}
      </div>
      <svg width="120" height="39" className="ml-auto mr-[64px] blur-[2px]">
        <path d="M0 0h28l60 39H54z" fill="#8cc0ec" opacity=".5" />
        <path d="M4 0h16l58 39H62z" fill="#d9ecfb" opacity=".75" />
      </svg>
      <Grip />
      <div className="flex items-center pl-3 gap-[10px] shrink-0">
        <div className="flex items-center gap-2">
          <svg width="16" height="14" fill="none"><rect x=".5" y="5.500" width="15" height="8" rx="1" fill="#444" stroke="#ddd" /><path d="M2 8h12M2 10h12M5 12h6" stroke="#eee" strokeDasharray="1 1" /><path d="M6 5c0-3 4-1 6-4" stroke="#ccc" /></svg>
          <svg width="15" height="16" className="mb-1"><circle cx="7.500" cy="8" r="7" fill="#1721a8" stroke="#c9d2ff" /><path d="M5 6.500c0-4 5-3.500 5-.5 0 2-2.500 2-2.500 4M7.500 11v2" fill="none" stroke="#fff" strokeWidth="1.600" /></svg>
          <svg width="10" height="24" fill="none" className="mb-1"><path d="M1 6.500h5v4H1zM3 6V3.500h5.500V8H6" stroke="#fff" /><path d="M2 18h6l-3 3z" fill="#fff" /></svg>
        </div>
        <div className="flex items-center gap-2 pt-1">
          <svg width="16" height="16" fill="none"><path d="M14.500 0c.5 3-2 4-5 4C5 3.500 2.500 6 2.500 9s2.500 5 5.500 5 5-2 5-5H9" stroke="#2ba0f0" strokeWidth="3.200" /></svg>
          <svg width="15" height="16" fill="none"><circle cx="7.500" cy="8" r="7.500" fill="#e8f8dc" /><path d="M4.500 8.500H11c0-2.500-1.500-4-3.500-4S4 6 4 8.500s1.500 4 3.500 4c1.500 0 2.500-.5 3.500-2" stroke="#4cb81e" strokeWidth="2.200" /></svg>
          <svg width="16" height="16" fill="none"><rect width="16" height="16" rx="3" fill="#ffa914" /><g transform="translate(1.500 1.500) scale(.54)"><CloudMark color="#fff" /></g></svg>
          <svg width="16" height="16" fill="none"><rect width="16" height="16" rx="2" fill="#fff" /><path d="M12 4C7 0 2.500 3 3.500 7.500l5 2.500M7 6.500h3l3 5" stroke="#2478d8" strokeWidth="2.200" /><path d="M2 9.500h4V12h6v3H2z" fill="#f58a1f" /></svg>
        </div>
        <div className="flex items-center gap-2 pt-1">
          <svg width="16" height="18"><path d="M3 1h5v5H3z" fill="#ccc" /><path d="M2 5h7v8l-3 3-4-3z" fill="#777" /><circle cx="11" cy="12" r="5" fill="#27a62b" /><path d="m8.500 12 2 2 3-4" fill="none" stroke="#fff" strokeWidth="1.600" /></svg>
          <svg width="16" height="16"><circle cx="8" cy="8" r="8" fill="#f5d90a" /><path d="M0 8a8 8 0 0 1 16 0z" fill="#4dab2f" /><circle cx="8" cy="8" r="5.500" fill="#f5d90a" /><path d="M8 4v8M4 8h8" stroke="#1e7a1e" strokeWidth="2.400" /></svg>
          <svg width="15" height="16" fill="none"><path d="M1 5h3l5-4v14l-5-4H1z" fill="#e8916f" stroke="#7a2a18" /><path d="M11 5c1.500 2 1.500 4 0 6M13 3c2 3 2 7 0 10" stroke="#b03a2a" /></svg>
          <svg width="16" height="14" fill="#fff"><path d="M0 12h2v2H0zM3 10h2v4H3zM6 7h2v7H6zM9 4h2v10H9zM12 1h3v13h-3z" /></svg>
          <svg width="15" height="16" fill="none"><path d="M1 5h2l4-4v14l-4-4H1z" fill="#fff" /><path d="M9 5c1.500 2 1.500 4 0 6M11.500 3c2.500 3 2.500 7 0 10" stroke="#fff" strokeWidth="1.200" /></svg>
        </div>
      </div>
      <div className="relative ml-[14px] w-[62px] shrink-0 text-xs leading-[17px] text-center whitespace-nowrap font-['Open_Sans','Noto_Sans_CJK_SC',sans-serif]">
        <p>15:52 周二</p>
        <p>2024/6/25</p>
        <span className="absolute -top-[2px] -right-[7px] size-[10px] rounded-full bg-[#f00000] text-[8px] leading-[10px] font-bold">1</span>
      </div>
      <button type="button" aria-label="操作" className="ml-[19px] flex items-center justify-center w-4 h-[14px] bg-white shrink-0">
        <svg width="6" height="8"><path d="M1 0 6 4 1 8z" fill="#0d2c4d" /></svg>
      </button>
      <button type="button" aria-label="显示桌面" className="ml-3 w-[14px] h-[38px] border border-[#7ea6cc] bg-[#2b5a8c] shrink-0" />
    </div>
  );
}

export default function App() {
  return (
    <div className="h-screen flex flex-col overflow-hidden bg-white font-['Noto_Sans_CJK_SC',sans-serif]">
      <header className="bg-linear-to-b from-white to-[#f2f2f2] pt-px">
        <TitleBar />
        <MenuBar />
      </header>
      <Ribbon />
      <PageTabs />
      <main className="flex-[485] min-h-0 flex flex-col">
        <div className="flex-1 min-h-0 overflow-hidden">
          <BillTable />
        </div>
        <div className="flex items-center h-4 bg-[#e8e8e8] border-b-2 border-[#bfbfbf]">
          <svg width="14" height="8"><path d="M8 0v8L4 4z" fill="#666" /></svg>
          <div className="flex-1">
            <div className="w-[88%] h-[10px] rounded-full bg-[#bfbfbf]" />
          </div>
          <svg width="12" height="8"><path d="M4 0v8l4-4z" fill="#666" /></svg>
        </div>
      </main>
      <DetailPanel />
      <StatusBar />
      <Taskbar />
    </div>
  );
}
